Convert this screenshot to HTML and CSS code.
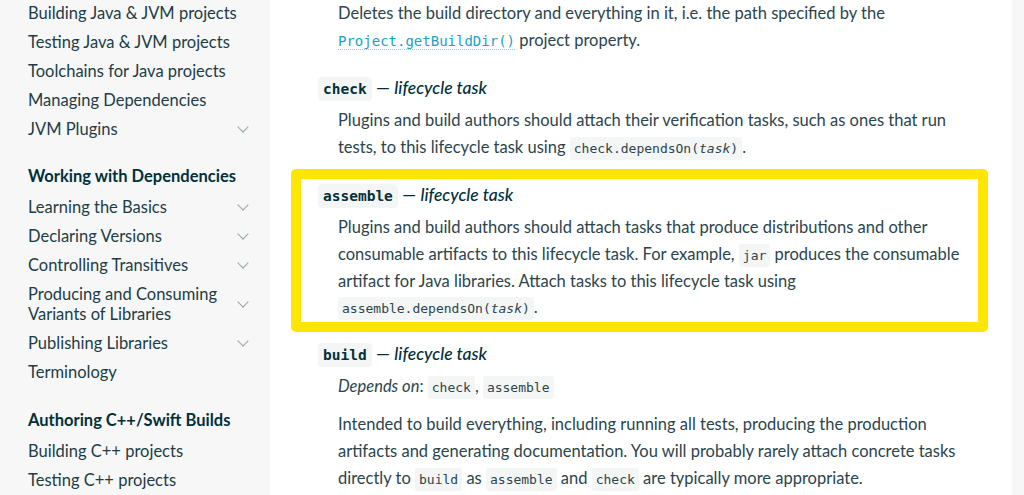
FILE: index.html
```html
<!DOCTYPE html>
<html lang="en">
<head>
    <meta charset="UTF-8">
    <title>Gradle Docs - Base Plugin Tasks</title>
    <link rel="stylesheet" href="styles.css">
</head>
<body>
    <nav class="sidebar">
        <ul class="nav-list">
            <li class="nav-item">Building Java &amp; JVM projects</li>
            <li class="nav-item">Testing Java &amp; JVM projects</li>
            <li class="nav-item">Toolchains for Java projects</li>
            <li class="nav-item">Managing Dependencies</li>
            <li class="nav-item has-sub">JVM Plugins <span class="chevron"></span></li>
        </ul>
        <h3 class="nav-title">Working with Dependencies</h3>
        <ul class="nav-list">
            <li class="nav-item has-sub">Learning the Basics <span class="chevron"></span></li>
            <li class="nav-item has-sub">Declaring Versions <span class="chevron"></span></li>
            <li class="nav-item has-sub">Controlling Transitives <span class="chevron"></span></li>
            <li class="nav-item has-sub">Producing and Consuming<br>Variants of Libraries <span class="chevron"></span></li>
            <li class="nav-item has-sub">Publishing Libraries <span class="chevron"></span></li>
            <li class="nav-item">Terminology</li>
        </ul>
        <h3 class="nav-title">Authoring C++/Swift Builds</h3>
        <ul class="nav-list">
            <li class="nav-item">Building C++ projects</li>
            <li class="nav-item">Testing C++ projects</li>
        </ul>
    </nav>

    <main class="content">
        <div class="task">
            <p class="task-desc">Deletes the build directory and everything in it, i.e. the path specified by the
                <a class="api-link" href="#">Project.getBuildDir()</a> project property.</p>
        </div>

        <div class="task">
            <h4 class="task-title"><code class="task-name">check</code> — <em>lifecycle task</em></h4>
            <p class="task-desc">Plugins and build authors should attach their verification tasks, such as ones that run
                tests, to this lifecycle task using <code>check.dependsOn(<em>task</em>)</code>.</p>
        </div>

        <div class="task highlight">
            <h4 class="task-title"><code class="task-name">assemble</code> — <em>lifecycle task</em></h4>
            <p class="task-desc">Plugins and build authors should attach tasks that produce distributions and other
                consumable artifacts to this lifecycle task. For example, <code>jar</code> produces the consumable
                artifact for Java libraries. Attach tasks to this lifecycle task using
                <code>assemble.dependsOn(<em>task</em>)</code>.</p>
        </div>

        <div class="task">
            <h4 class="task-title"><code class="task-name">build</code> — <em>lifecycle task</em></h4>
            <p class="task-desc depends"><em>Depends on</em>: <code>check</code>, <code>assemble</code></p>
            <p class="task-desc">Intended to build everything, including running all tests, producing the production
                artifacts and generating documentation. You will probably rarely attach concrete tasks
                directly to <code>build</code> as <code>assemble</code> and <code>check</code> are typically more appropriate.</p>
        </div>
    </main>

    <div class="toc-gutter"></div>
</body>
</html>
```

FILE: styles.css
```css
body {
    margin: 0;
    display: flex;
    height: 495px;
    overflow: hidden;
    font-family: Lato, "Noto Sans", sans-serif;
    color: #02303a;
    background-color: white;
}
.sidebar {
    width: 270px;
    flex-shrink: 0;
    background-color: #f7f7f7;
    padding: 0 20px 0 28px;
    box-sizing: border-box;
    margin-top: -2px;
}
.nav-list {
    list-style: none;
    margin: 0;
    padding: 0;
}
.nav-item {
    display: flex;
    align-items: center;
    justify-content: space-between;
    padding: 4.5px 0;
    font-size: 16.5px;
    line-height: 20px;
    color: #1d3d45;
}
.nav-title {
    margin: 18.5px 0 2px;
    padding: 4.5px 0;
    font-size: 16.5px;
    line-height: 20px;
    font-weight: bold;
    color: #02303a;
}
.chevron {
    width: 7px;
    height: 7px;
    border-right: 1px solid #9aa5a8;
    border-bottom: 1px solid #9aa5a8;
    transform: rotate(45deg);
    margin: -4px 3px 0 0;
}
.content {
    flex: 1;
    padding-right: 24px;
}
.toc-gutter {
    width: 12px;
    flex-shrink: 0;
    background-color: #f7f7f7;
}
.task {
    padding-left: 48px;
}
.task-title {
    margin: 20px 0 4px;
    font-size: 17.5px;
    line-height: 30px;
    font-weight: 600;
    color: #02303a;
}
.task-title em {
    font-weight: 500;
}
.task-name {
    font-family: "DejaVu Sans Mono", monospace;
    font-size: 14.5px;
    line-height: 1;
    font-weight: bold;
    background-color: #f4f5f5;
    border-radius: 4px;
    padding: 4px 5px;
}
.task-desc {
    margin: 0 0 0 20px;
    max-width: 628px;
    font-size: 16.5px;
    line-height: 26.6px;
    color: #2b454c;
}
.task-desc.depends {
    margin-top: 4px;
    margin-bottom: 12px;
}
.task-desc code {
    font-family: "DejaVu Sans Mono", monospace;
    font-size: 13px;
    line-height: 1;
    background-color: #f4f5f5;
    border-radius: 3px;
    padding: 4px 4px;
    color: #2b454c;
}
.api-link {
    font-family: "DejaVu Sans Mono", monospace;
    font-size: 14px;
    line-height: 1;
    color: #1da2c3;
    text-decoration: none;
    border-bottom: 1px dotted #9fc9d4;
}
.highlight {
    margin: 9px 0 0 21px;
    padding: 1px 0 1px 17px;
    border: 10px solid #ffe500;
    border-radius: 5px;
}
.highlight .task-title {
    margin-top: 0;
}
.highlight + .task .task-title {
    margin-top: 7px;
}
```
